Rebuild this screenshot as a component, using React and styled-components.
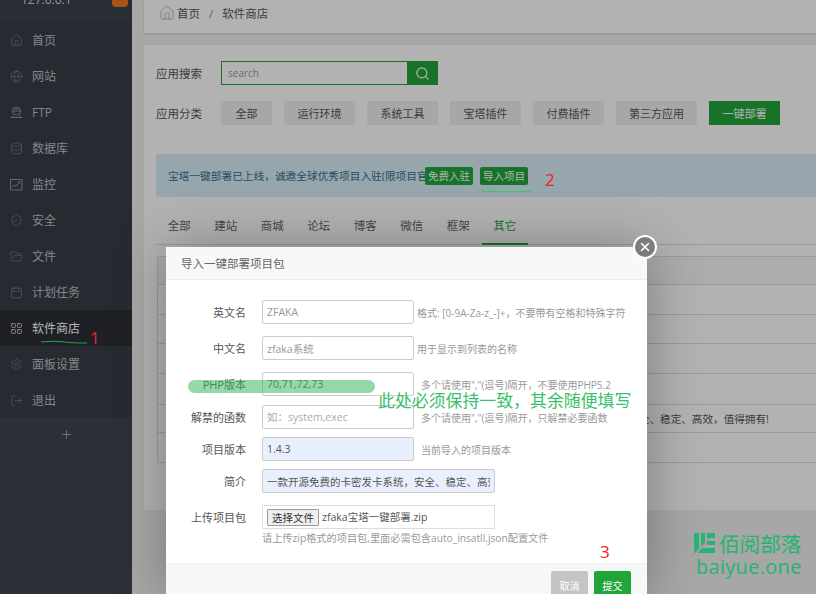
import React from 'react';
import styled, { createGlobalStyle } from 'styled-components';
import {
  Calendar,
  Database,
  FolderOpen,
  Globe,
  Home,
  LayoutGrid,
  LogOut,
  Monitor,
  Plus,
  Search,
  Settings,
  ShieldCheck,
  X,
} from 'lucide-react';

const GlobalStyle = createGlobalStyle`
  html, body {
    margin: 0;
    padding: 0;
    background: #f0f0f0;
  }
  * {
    box-sizing: border-box;
  }
`;

const FONT = '"Open Sans", "Noto Sans CJK SC", sans-serif';

const Page = styled.div`
  position: relative;
  display: flex;
  width: 816px;
  height: 594px;
  overflow: hidden;
  font-family: ${FONT};
  font-size: 11.5px;
  color: #555;
  background: #f0f0f0;
`;

const Shade = styled.div`
  position: absolute;
  inset: 0;
  background: rgba(0, 0, 0, 0.3);
`;

/* sidebar */
const Sidebar = styled.aside`
  flex: 0 0 132px;
  background: #3f4650;
`;
const HostRow = styled.div`
  display: flex;
  height: 22px;
  overflow: hidden;
  padding-right: 4px;
  color: #d8d8d8;
  font-size: 12px;
  background: #3b424b;
`;
const HostName = styled.span`
  flex: 1;
  margin-top: -9px;
  padding-left: 21px;
`;
const HostBadge = styled.span`
  width: 16px;
  height: 7px;
  border-radius: 0 0 4px 4px;
  background: #f0771f;
`;
const NavList = styled.nav`
  background: #383e47;
`;
const NavItem = styled.div`
  display: flex;
  align-items: center;
  gap: 9px;
  height: 36px;
  padding-left: 10px;
  font-size: 12px;
  color: ${p => (p.$active ? '#fff' : '#bcc0c4')};
  background: ${p => (p.$active ? '#2b2f35' : 'transparent')};
  svg {
    flex: none;
    color: ${p => (p.$active ? '#fff' : '#8d9298')};
  }
`;
const AddRow = styled.div`
  display: flex;
  justify-content: center;
  padding-top: 10px;
  color: #a5a8ac;
`;

/* main column */
const Main = styled.main`
  flex: 1;
  min-width: 0;
  padding-left: 12px;
`;
const Crumbs = styled.div`
  display: flex;
  align-items: center;
  height: 33px;
  padding: 0 0 7px 15px;
  background: #fff;
  box-shadow: 0 1px 2px rgba(0, 0, 0, 0.15);
  color: #555;
  svg {
    color: #999;
    margin-right: 2px;
  }
`;
const CrumbSep = styled.span`
  margin: 0 9px;
  color: #888;
`;
const Card = styled.section`
  height: 465px;
  margin-top: 12px;
  padding: 16px 0 0 12px;
  background: #fff;
`;
const FilterRow = styled.div`
  display: flex;
  align-items: center;
  height: 24px;
  margin-bottom: 16px;
`;
const FilterLabel = styled.span`
  width: 65px;
  color: #555;
`;
const SearchBox = styled.div`
  display: flex;
  width: 217px;
  height: 24px;
`;
const SearchInput = styled.input`
  flex: 1;
  min-width: 0;
  padding: 0 6px;
  border: 1px solid #20a53a;
  border-right: 0;
  background: #fff;
  outline: none;
  font-family: ${FONT};
  font-size: 10px;
  &::placeholder {
    color: #999;
  }
`;
const SearchButton = styled.button`
  display: flex;
  align-items: center;
  justify-content: center;
  width: 31px;
  padding: 0;
  border: 0;
  background: #20a53a;
  color: #fff;
`;
const Chips = styled.div`
  display: flex;
  gap: 12px;
`;
const Chip = styled.button`
  width: ${p => p.$w}px;
  height: 24px;
  padding: 0;
  border: 0;
  background: ${p => (p.$on ? '#20a53a' : '#f0f0f0')};
  color: ${p => (p.$on ? '#fff' : '#555')};
  font-family: ${FONT};
  font-size: 11px;
`;
const Notice = styled.div`
  display: flex;
  align-items: center;
  height: 43px;
  margin-top: 29px;
  padding-left: 12px;
  border-radius: 3px 0 0 3px;
  background: #d9edf7;
  color: #31708f;
`;
const NoticeText = styled.span`
  width: 257px;
  font-size: 10.7px;
  white-space: nowrap;
`;
const NoticeButton = styled.span`
  display: flex;
  align-items: center;
  justify-content: center;
  width: 48px;
  height: 18px;
  margin-right: 7px;
  border-radius: 2px;
  background: #20a53a;
  color: #fff;
  font-size: 10.5px;
`;
const Tabs = styled.div`
  display: flex;
  height: 48px;
  margin-top: 0;
  border-bottom: 1px solid #ddd;
`;
const Tab = styled.div`
  display: flex;
  align-items: center;
  justify-content: center;
  width: 46.5px;
  height: 48px;
  padding-top: 9px;
  color: ${p => (p.$on ? '#20a53a' : '#666')};
  border-bottom: 2px solid ${p => (p.$on ? '#20a53a' : 'transparent')};
`;
const Table = styled.div`
  margin: 11px 0 0 1px;
  border-top: 1px solid #ddd;
  border-left: 1px solid #ddd;
`;
const TableRow = styled.div`
  display: flex;
  align-items: center;
  height: ${p => p.$h}px;
  padding-left: 322px;
  border-bottom: 1px solid #ddd;
  background: ${p => (p.$head ? '#f6f6f6' : '#fff')};
  font-size: 10.6px;
  white-space: nowrap;
`;

/* dialog */
const Modal = styled.div`
  position: absolute;
  left: 166px;
  top: 247px;
  display: flex;
  flex-direction: column;
  width: 481px;
  height: 347px;
  background: #fff;
  box-shadow: 1px 1px 50px rgba(0, 0, 0, 0.3);
`;
const CloseButton = styled.button`
  position: absolute;
  top: -12px;
  right: -10px;
  display: flex;
  align-items: center;
  justify-content: center;
  width: 24px;
  height: 24px;
  padding: 0;
  border: 2px solid #fff;
  border-radius: 50%;
  background: #7d7d7d;
  color: #fff;
`;
const ModalTitle = styled.div`
  display: flex;
  align-items: center;
  height: 33px;
  padding-left: 15px;
  border-bottom: 1px solid #eee;
  background: #f8f8f8;
  color: #666;
  font-size: 11.5px;
`;
const ModalBody = styled.div`
  flex: 1;
  padding-top: 20px;
`;
const FormRow = styled.div`
  display: flex;
  align-items: center;
  height: 24px;
  margin-bottom: ${p => p.$gap}px;
`;
const RowLabel = styled.label`
  width: 80px;
  margin-right: 16px;
  text-align: right;
  color: #555;
  font-size: 11px;
  white-space: nowrap;
`;
const Field = styled.input`
  width: ${p => p.$w || 152}px;
  height: 24px;
  padding: 0 4px;
  border: 1px solid #ccc;
  border-radius: 2px;
  outline: none;
  background: ${p => (p.$filled ? '#e8f0fe' : '#fff')};
  color: ${p => (p.$muted ? '#999' : '#555')};
  font-family: ${FONT};
  font-size: 10.5px;
  &::placeholder {
    color: #aaa;
  }
`;
const Hint = styled.span`
  margin-left: ${p => p.$indent}px;
  color: #999;
  font-size: 10px;
  white-space: nowrap;
`;
const UploadBox = styled.div`
  display: flex;
  align-items: flex-start;
  width: 233px;
  height: 24px;
  padding: 3px 4px;
  border: 1px solid #ddd;
  color: #555;
  font-size: 10.5px;
`;
const FileButton = styled.span`
  display: flex;
  align-items: center;
  justify-content: center;
  width: 52px;
  height: 17px;
  margin-right: 3px;
  border: 1px solid #999;
  border-radius: 1px;
  background: #efefef;
  color: #333;
  font-size: 10.5px;
`;
const UploadHint = styled.div`
  margin: 1px 0 0 96px;
  color: #999;
  font-size: 10.2px;
  white-space: nowrap;
`;
const ModalFooter = styled.div`
  display: flex;
  justify-content: flex-end;
  gap: 6px;
  height: 31px;
  padding: 7px 16px 0 0;
  border-top: 1px solid #eee;
  background: #f6f8f8;
`;
const FooterButton = styled.button`
  width: 37px;
  height: 28px;
  padding: 0;
  border: 0;
  border-radius: 2px;
  background: ${p => (p.$primary ? '#20a53a' : '#c4c4c4')};
  color: #fff;
  font-family: ${FONT};
  font-size: 10px;
`;

/* marks drawn over the screenshot */
const RedMark = styled.span`
  position: absolute;
  left: ${p => p.$x}px;
  top: ${p => p.$y}px;
  color: #f0212e;
  font-size: 17px;
  line-height: 20px;
`;
const Highlight = styled.div`
  position: absolute;
  left: 188px;
  top: 380px;
  width: 187px;
  height: 13px;
  border-radius: 7px;
  background: rgba(50, 185, 90, 0.52);
`;
const GreenNote = styled.div`
  position: absolute;
  left: 378px;
  top: 389px;
  color: #3ac069;
  font-size: 16.9px;
  line-height: 24px;
  white-space: nowrap;
`;
const Stroke = styled.svg`
  position: absolute;
  left: ${p => p.$x}px;
  top: ${p => p.$y}px;
`;
const Watermark = styled.div`
  position: absolute;
  left: 692px;
  top: 531px;
  display: grid;
  grid-template-columns: 27px auto;
  color: #22b573;
`;
const WatermarkName = styled.span`
  font-size: 20.6px;
  line-height: 26px;
  white-space: nowrap;
`;
const WatermarkSite = styled.span`
  grid-column: 1 / 3;
  margin: -1px 0 0 4px;
  font-family: "Open Sans", sans-serif;
  font-size: 20px;
  line-height: 22px;
  letter-spacing: 0.3px;
`;

const FtpIcon = () => (
  <svg width="13" height="13" viewBox="0 0 13 13" fill="none" stroke="currentColor">
    <circle cx="6.5" cy="5" r="4" />
    <path d="M2.5 5h8M4.5 3h4M0.5 11.5h12M3 9.5v2M10 9.5v2" />
  </svg>
);

const MonitorIcon = () => (
  <svg width="13" height="13" viewBox="0 0 13 13" fill="none" stroke="currentColor">
    <rect x="0.5" y="1.5" width="11.5" height="10.5" />
    <path d="M2 9l2-2 2 1.5 2-3M8 3.5h2.5M8 5h2.5" />
  </svg>
);

const navItems = [
  { label: '首页', icon: <Home size={13} strokeWidth={1} /> },
  { label: '网站', icon: <Globe size={13} strokeWidth={1} /> },
  { label: 'FTP', icon: <FtpIcon /> },
  { label: '数据库', icon: <Database size={13} strokeWidth={1} /> },
  { label: '监控', icon: <MonitorIcon /> },
  { label: '安全', icon: <ShieldCheck size={13} strokeWidth={1} /> },
  { label: '文件', icon: <FolderOpen size={13} strokeWidth={1} /> },
  { label: '计划任务', icon: <Calendar size={13} strokeWidth={1} /> },
  { label: '软件商店', icon: <LayoutGrid size={13} strokeWidth={1.2} />, active: true },
  { label: '面板设置', icon: <Settings size={13} strokeWidth={1} /> },
  { label: '退出', icon: <LogOut size={13} strokeWidth={1} /> },
];

const chips = [
  { label: '全部', w: 51 },
  { label: '运行环境', w: 71 },
  { label: '系统工具', w: 71 },
  { label: '宝塔插件', w: 71 },
  { label: '付费插件', w: 71 },
  { label: '第三方应用', w: 81 },
  { label: '一键部署', w: 71, on: true },
];

const tabs = ['全部', '建站', '商城', '论坛', '博客', '微信', '框架', '其它'];

const rows = [
  { h: 28, head: true },
  { h: 30 },
  { h: 29 },
  { h: 30 },
  { h: 31 },
  { h: 28, text: '一款开源免费的卡密发卡系统，安全、稳定、高效，值得拥有!' },
  { h: 30, text: '宝塔一键部署的免费开源发卡系统' },
];

const App = () => {
  return (
    <Page>
      <GlobalStyle />
      <Sidebar>
        <HostRow>
          <HostName>127.0.0.1</HostName>
          <HostBadge />
        </HostRow>
        <NavList>
          {navItems.map(item => (
            <NavItem key={item.label} $active={item.active}>
              {item.icon}
              {item.label}
            </NavItem>
          ))}
        </NavList>
        <AddRow>
          <Plus size={13} strokeWidth={1.8} />
        </AddRow>
      </Sidebar>

      <Main>
        <Crumbs>
          <Home size={16} strokeWidth={1} />
          首页
          <CrumbSep>/</CrumbSep>
          软件商店
        </Crumbs>
        <Card>
          <FilterRow>
            <FilterLabel>应用搜索</FilterLabel>
            <SearchBox>
              <SearchInput placeholder='search' readOnly />
              <SearchButton>
                <Search size={15} strokeWidth={2} />
              </SearchButton>
            </SearchBox>
          </FilterRow>
          <FilterRow>
            <FilterLabel>应用分类</FilterLabel>
            <Chips>
              {chips.map(chip => (
                <Chip key={chip.label} $w={chip.w} $on={chip.on}>
                  {chip.label}
                </Chip>
              ))}
            </Chips>
          </FilterRow>
          <Notice>
            <NoticeText>宝塔一键部署已上线，诚邀全球优秀项目入驻(限项目官方)</NoticeText>
            <NoticeButton>免费入驻</NoticeButton>
            <NoticeButton>导入项目</NoticeButton>
          </Notice>
          <Tabs>
            {tabs.map(tab => (
              <Tab key={tab} $on={tab === '其它'}>
                {tab}
              </Tab>
            ))}
          </Tabs>
          <Table>
            {rows.map((row, i) => (
              <TableRow key={i} $h={row.h} $head={row.head}>
                {row.text}
              </TableRow>
            ))}
          </Table>
        </Card>
      </Main>

      <Shade />

      <Modal>
        <CloseButton>
          <X size={14} strokeWidth={2.6} />
        </CloseButton>
        <ModalTitle>导入一键部署项目包</ModalTitle>
        <ModalBody>
          <FormRow $gap={12}>
            <RowLabel>英文名</RowLabel>
            <Field value='ZFAKA' $muted readOnly />
            <Hint $indent={3}>格式: [0-9A-Za-z_-]+，不要带有空格和特殊字符</Hint>
          </FormRow>
          <FormRow $gap={12}>
            <RowLabel>中文名</RowLabel>
            <Field value='zfaka系统' $muted readOnly />
            <Hint $indent={3}>用于显示到列表的名称</Hint>
          </FormRow>
          <FormRow $gap={9}>
            <RowLabel>PHP版本</RowLabel>
            <Field value='70,71,72,73' readOnly />
            <Hint $indent={7}>多个请使用","(逗号)隔开，不要使用PHP5.2</Hint>
          </FormRow>
          <FormRow $gap={8}>
            <RowLabel>解禁的函数</RowLabel>
            <Field placeholder='如：system,exec' readOnly />
            <Hint $indent={7}>多个请使用","(逗号)隔开，只解禁必要函数</Hint>
          </FormRow>
          <FormRow $gap={8}>
            <RowLabel>项目版本</RowLabel>
            <Field value='1.4.3' $filled readOnly />
            <Hint $indent={7}>当前导入的项目版本</Hint>
          </FormRow>
          <FormRow $gap={12}>
            <RowLabel>简介</RowLabel>
            <Field
              $w={233}
              $filled
              value='一款开源免费的卡密发卡系统，安全、稳定、高效，值得拥有!'
              readOnly
            />
          </FormRow>
          <FormRow $gap={0}>
            <RowLabel>上传项目包</RowLabel>
            <UploadBox>
              <FileButton>选择文件</FileButton>
              zfaka宝塔一键部署.zip
            </UploadBox>
          </FormRow>
          <UploadHint>请上传zip格式的项目包,里面必需包含auto_insatll.json配置文件</UploadHint>
        </ModalBody>
        <ModalFooter>
          <FooterButton>取消</FooterButton>
          <FooterButton $primary>提交</FooterButton>
        </ModalFooter>
      </Modal>

      <Highlight />
      <GreenNote>此处必须保持一致，其余随便填写</GreenNote>
      <RedMark $x={90} $y={328}>1</RedMark>
      <RedMark $x={545} $y={170}>2</RedMark>
      <RedMark $x={600} $y={542}>3</RedMark>
      <Stroke $x={40} $y={339} width="48" height="6" viewBox="0 0 48 6" fill="none">
        <path d="M1 3c10-1 18-1 24 0 7 1 14 1 22 1" stroke="#1fa83c" strokeWidth="1.2" />
      </Stroke>
      <Stroke $x={481} $y={189} width="52" height="5" viewBox="0 0 52 5" fill="none">
        <path d="M1 2c14 1 32 1 50 0" stroke="#2ecc5a" strokeWidth="1.1" />
      </Stroke>

      <Watermark>
        <svg width="24" height="26" viewBox="0 0 24 26">
          <path d="M2 2h5v15l-5 5zM9 2h4v9l-4 4zM15 2h8v5h-8zM15 10h8v4h-8zM10 17h13v5H6z" fill="#22b573" />
          <path d="M0 25L22 3" stroke="#8a8a8a" strokeWidth="0.8" />
        </svg>
        <WatermarkName>佰阅部落</WatermarkName>
        <WatermarkSite>baiyue.one</WatermarkSite>
      </Watermark>
    </Page>
  );
};

export default App;
